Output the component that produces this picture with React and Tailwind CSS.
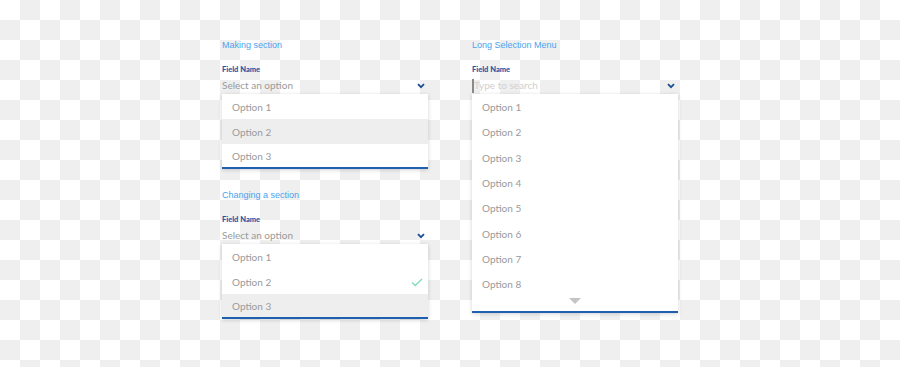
const FONT = "font-['Lato','Liberation_Sans',sans-serif]";

function Chevron() {
  return (
    <svg width="8" height="6" viewBox="0 0 8 6" className="mr-[3px]">
      <path d="M1 1.2l3 3 3-3" fill="none" stroke="#1b4f93" strokeWidth="1.8" />
    </svg>
  );
}

function Check() {
  return (
    <svg width="12" height="9" viewBox="0 0 12 9">
      <path d="M1 4.5l3.2 3L11 1" fill="none" stroke="#80d8c0" strokeWidth="1.3" />
    </svg>
  );
}

function Field({ title, search, children }) {
  return (
    <div className="w-[206px]">
      <div className="h-[12px] font-['Liberation_Sans',sans-serif] text-[9px] leading-[12px] text-[#4aa3f0]">{title}</div>
      <div className="mt-[14px] h-[10px] text-[7.5px] font-black leading-[10px] text-[#1d58a8]">Field Name</div>
      <div className="mt-[2px] flex h-[16px] items-center justify-between pt-[1px]">
        {search ? (
          <div className="flex items-center text-[10px] text-[#cfcfcf]">
            <span className="h-[14px] w-[2px] bg-[#8a8a8a]" />
            <span>Type to search</span>
          </div>
        ) : (
          <span className="text-[10px] text-[#9a9a9a]">Select an option</span>
        )}
        <Chevron />
      </div>
      <div className="mt-[1px] bg-white shadow-[0_1px_4px_rgba(0,0,0,0.18)]">{children}</div>
    </div>
  );
}

function Option({ label, active, checked, last, tall }) {
  return (
    <div
      className={`flex items-center justify-between pl-[10px] pr-[5px] pt-[2px] text-[10px] text-[#9a9a9a] ${tall ? 'h-[25.3px]' : 'h-[25px]'} ${active ? 'bg-[#eeeeee]' : ''} ${last ? 'border-b-2 border-[#1f5fb0]' : ''}`}
    >
      <span>{label}</span>
      {checked && <Check />}
    </div>
  );
}

export default function App() {
  const long = ['Option 1', 'Option 2', 'Option 3', 'Option 4', 'Option 5', 'Option 6', 'Option 7', 'Option 8'];
  return (
    <div
      className={`flex h-[367px] w-[900px] justify-center gap-[44px] pt-[39px] ${FONT} bg-[conic-gradient(#efefef_90deg,#ffffff_90deg_180deg,#efefef_180deg_270deg,#ffffff_270deg)] bg-size-[40px_40px]`}
    >
      <div className="flex flex-col gap-[20px]">
        <Field title="Making section">
          <Option label="Option 1" />
          <Option label="Option 2" active />
          <Option label="Option 3" last />
        </Field>
        <Field title="Changing a section">
          <Option label="Option 1" />
          <Option label="Option 2" checked />
          <Option label="Option 3" active last />
        </Field>
      </div>
      <Field title="Long Selection Menu" search>
        {long.map(o => (
          <Option key={o} label={o} tall />
        ))}
        <div className="flex h-[17px] justify-center border-b-2 border-[#1f5fb0] pt-[2px]">
          <svg width="12" height="6" viewBox="0 0 12 6">
            <path d="M0 0h12L6 6z" fill="#c4c4c4" />
          </svg>
        </div>
      </Field>
    </div>
  );
}
